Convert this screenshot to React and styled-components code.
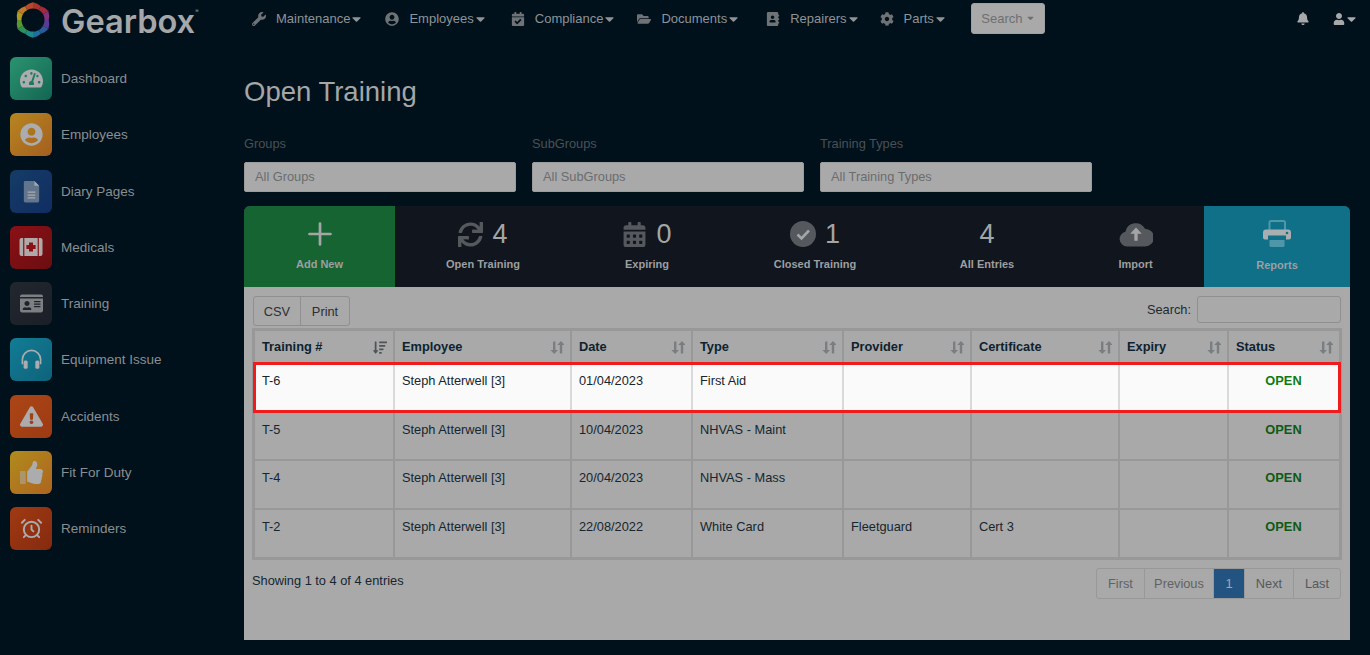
import React from 'react';
import styled, { createGlobalStyle } from 'styled-components';
import {
  FaTachometerAlt, FaUserCircle, FaExclamationTriangle, FaWrench, FaCalendarCheck,
  FaFolderOpen, FaAddressBook, FaCog, FaBell, FaUser, FaCaretDown,
  FaSync, FaCalendarAlt, FaSortAmountDown, FaIdCard,
} from 'react-icons/fa';
import { Plus, AlarmClock } from 'lucide-react';

const GlobalStyle = createGlobalStyle`
  html, body {
    margin: 0;
    padding: 0;
    background: #00111c;
    font-family: "Liberation Sans", Arial, sans-serif;
    font-size: 13px;
  }
  * { box-sizing: border-box; }
`;

const Page = styled.div`
  display: grid;
  grid-template-columns: 244px 1126px;
  grid-template-rows: 37px 1fr;
  width: 1370px;
  height: 655px;
  overflow: hidden;
  background: #00111c;
`;

const Brand = styled.div`
  display: flex;
  align-items: center;
  gap: 10px;
  padding: 3px 0 0 15px;
  height: 37px;
`;

const BrandName = styled.span`
  font-family: Inter, "Liberation Sans", sans-serif;
  font-size: 32.6px;
  font-weight: 600;
  color: #a5a7a9;
  line-height: 37px;
  margin-top: 3px;
  sup { font-size: 5px; font-weight: 400; vertical-align: 20px; line-height: 0; }
`;

const TopBar = styled.nav`
  display: flex;
  align-items: center;
  height: 37px;
  padding-left: 8px;
  color: #8b8f93;
`;

const NavItem = styled.div`
  display: flex;
  align-items: center;
  margin-right: ${(p) => p.$gap}px;
  font-size: 13px;
  color: #8f9396;
  svg.lead { width: 14px; height: 14px; margin-right: 10px; color: #6f7376; }
  svg.caret { width: 9px; height: 14px; margin-left: 2px; }
`;

const SearchButton = styled.button`
  display: flex;
  align-items: center;
  gap: 5px;
  width: 74px;
  height: 31px;
  margin: -1px 0 0 -1px;
  justify-content: center;
  background: #a9a9a9;
  border: 1px solid #a0a0a0;
  border-radius: 3px;
  color: #6d7073;
  font: 13px "Liberation Sans", sans-serif;
  svg { width: 7px; height: 10px; }
`;

const TopRight = styled.div`
  display: flex;
  align-items: center;
  gap: 24px;
  margin-left: auto;
  padding-right: 14px;
  color: #a6a8a9;
  svg.bell { width: 12px; height: 13px; }
  svg.user { width: 12px; height: 12px; }
  svg.caret { width: 9px; height: 14px; margin-left: 2px; }
`;

const UserMenu = styled.div`
  display: flex;
  align-items: center;
`;

const Sidebar = styled.aside`
  display: flex;
  flex-direction: column;
  gap: 13.25px;
  padding: 20px 0 0 10px;
`;

const SideItem = styled.div`
  display: flex;
  align-items: center;
  gap: 9px;
  font-size: 13.5px;
  color: #8a8e91;
`;

const SideIcon = styled.div`
  display: flex;
  align-items: center;
  justify-content: center;
  width: 42px;
  height: 43px;
  border-radius: 6px;
  background: linear-gradient(135deg, ${(p) => p.$from}, ${(p) => p.$to});
  color: #aaacae;
  svg { width: ${(p) => p.$size || 23}px; height: ${(p) => p.$size || 23}px; }
`;

const Main = styled.main`
  padding: 0;
`;

const Title = styled.h1`
  margin: 38px 0 0;
  font-size: 27.5px;
  line-height: 34px;
  font-weight: 400;
  color: #a4a6a8;
  font-family: "Liberation Sans", sans-serif;
`;

const Filters = styled.div`
  display: flex;
  gap: 16px;
  margin-top: 27px;
`;

const Filter = styled.div`
  width: 272px;
`;

const FilterLabel = styled.div`
  font-size: 12.8px;
  line-height: 16px;
  color: #4a5054;
  margin-bottom: 10px;
`;

const FilterBox = styled.div`
  height: 30px;
  line-height: 28px;
  padding-left: 10px;
  background: #a9a9a9;
  border: 1px solid #9c9c9c;
  border-radius: 2px;
  font-size: 12.8px;
  color: #6a6d70;
`;

const Panel = styled.section`
  margin-top: 14px;
  height: 434px;
  width: 1106px;
  background: #a9a9a9;
  border-radius: 6px 6px 0 0;
`;

const Tabs = styled.div`
  display: grid;
  grid-template-columns: 151px 176px 152px 184px 160px 137px 146px;
  height: 81px;
  background: #10151e;
  border-radius: 6px 6px 0 0;
  overflow: hidden;
`;

const Tab = styled.div`
  display: flex;
  flex-direction: column;
  align-items: center;
  padding-top: 14px;
  background: ${(p) => p.$bg || 'transparent'};
`;

const TabTop = styled.div`
  display: flex;
  align-items: center;
  gap: 9px;
  height: 28px;
  font-size: 27px;
  line-height: 28px;
  color: #a3a5a7;
  svg { width: ${(p) => p.$size || 25}px; height: ${(p) => p.$size || 25}px; color: ${(p) => p.$color || '#55585d'}; flex-shrink: 0; }
`;

const TabLabel = styled.div`
  margin-top: ${(p) => p.$mt || 9}px;
  font-size: 11px;
  line-height: 14px;
  font-weight: 700;
  color: #9d9fa1;
`;

const Body = styled.div`
  padding: 9px 9px 0;
`;

const TableTools = styled.div`
  display: flex;
  align-items: flex-start;
  justify-content: space-between;
  height: 33px;
`;

const ButtonGroup = styled.div`
  display: flex;
  height: 30px;
  border: 1px solid #8f8f8f;
  border-radius: 3px;
  color: #2c2f33;
  font-size: 12.8px;
`;

const GroupButton = styled.div`
  display: flex;
  align-items: center;
  justify-content: center;
  width: ${(p) => p.$w}px;
  & + & { border-left: 1px solid #8f8f8f; }
`;

const SearchWrap = styled.label`
  display: flex;
  align-items: center;
  gap: 6px;
  font-size: 12.8px;
  color: #1e2a33;
`;

const SearchInput = styled.div`
  width: 144px;
  height: 27px;
  border: 1px solid #8f8f8f;
  border-radius: 3px;
`;

const Table = styled.table`
  width: 1086px;
  margin: 0 0 0 -0.5px;
  border-collapse: collapse;
  table-layout: fixed;
  font-size: 12.8px;
  color: #16262f;
  outline: 2px solid #989898;
  outline-offset: -1px;
`;

const Th = styled.th`
  position: relative;
  height: 33px;
  padding: 0 7.5px;
  text-align: left;
  font-weight: 700;
  color: #0e222f;
  border: 2px solid #989898;
  svg.sort { position: absolute; right: 6px; top: 9px; width: 14px; height: 15px; color: ${(p) => (p.$active ? '#4f5356' : '#7b7e81')}; }
`;

const Row = styled.tr`
  position: relative;
  background: ${(p) => (p.$hot ? '#fafafa' : '#a9a9a9')};
  ${(p) => p.$hot && 'outline: 3px solid #ee1c1c; outline-offset: -2px;'}
`;

const Td = styled.td`
  height: 48.7px;
  padding: 9px 7.5px 0;
  vertical-align: top;
  border: 2px solid ${(p) => (p.$hot ? '#d9d9d9' : '#989898')};
  line-height: 16px;
  color: #16262f;
`;

const Status = styled.div`
  text-align: center;
  font-weight: 700;
  color: ${(p) => (p.$hot ? '#0f7a12' : '#0f5a14')};
`;

const Footer = styled.div`
  display: flex;
  justify-content: space-between;
  align-items: flex-start;
  margin-top: 9px;
`;

const Info = styled.div`
  font-size: 12.8px;
  line-height: 30px;
  margin: -2px 0 0 -1px;
  color: #16262f;
`;

const Pager = styled.div`
  display: flex;
  height: 31px;
  border: 1px solid #989898;
  border-radius: 3px;
  font-size: 12.8px;
`;

const PageLink = styled.div`
  display: flex;
  align-items: center;
  justify-content: center;
  width: ${(p) => p.$w}px;
  color: ${(p) => (p.$active ? '#a3a8ad' : p.$dim ? '#606366' : '#55585b')};
  background: ${(p) => (p.$active ? '#235380' : 'transparent')};
  & + & { border-left: 1px solid #989898; }
`;

function DiaryIcon() {
  return (
    <svg viewBox="0 0 24 24">
      <path d="M5 1h10l5 5v16a1.5 1.5 0 0 1-1.5 1.5h-13A1.5 1.5 0 0 1 4 22V2.5A1.5 1.5 0 0 1 5 1z" fill="#63758c" />
      <path d="M15 1l5 5h-5z" fill="#a2a8ad" />
      <path d="M8 12h8v1.4H8zM8 15h8v1.4H8zM8 18h8v1.4H8z" fill="#aaacae" />
    </svg>
  );
}

function MedicalIcon() {
  return (
    <svg viewBox="0 0 24 24">
      <rect x="0.5" y="3" width="23" height="18" rx="2" fill="#b0a9a9" />
      <rect x="4" y="3" width="1.4" height="18" fill="#8a2a2c" />
      <rect x="18.6" y="3" width="1.4" height="18" fill="#8a2a2c" />
      <path d="M10 7.5h4V10h2.6v4H14v2.5h-4V14H7.4v-4H10z" fill="#8a1216" />
    </svg>
  );
}

function HeadphoneIcon() {
  return (
    <svg viewBox="0 0 24 24" fill="none">
      <path d="M2.5 17v-5a9.5 9.5 0 0 1 19 0v5" stroke="currentColor" strokeWidth="1.7" />
      <rect x="3.8" y="13" width="4.2" height="8.6" rx="1.6" fill="currentColor" />
      <rect x="16" y="13" width="4.2" height="8.6" rx="1.6" fill="currentColor" />
    </svg>
  );
}

function ThumbIcon() {
  return (
    <svg viewBox="0 0 512 512">
      <rect x="0" y="224" width="128" height="288" rx="22" fill="#aaacae" opacity="0.55" />
      <path
        fill="currentColor"
        d="M384 81.452c0 42.416-25.97 66.208-33.277 94.548h101.723c33.397 0 59.397 27.746 59.553 58.098.084 17.938-7.546 37.249-19.439 49.197l-.11.11c9.836 23.337 8.237 56.037-9.308 79.469 8.681 25.895-.069 57.704-16.382 74.757 4.298 17.598 2.244 32.575-6.148 44.632C440.202 511.587 389.616 512 346.839 512l-2.845-.001c-48.287-.017-87.806-17.598-119.56-31.725-15.957-7.099-36.821-15.887-52.651-16.178-6.54-.12-11.783-5.457-11.783-11.998v-213.77c0-3.2 1.282-6.271 3.558-8.521 39.614-39.144 56.648-80.587 89.117-113.111 14.804-14.832 20.188-37.236 25.393-58.902C282.515 39.293 291.817 0 312 0c24 0 72 8 72 81.452z"
      />
    </svg>
  );
}

function TrainingIcon() {
  return <FaIdCard style={{ color: '#7d8083' }} />;
}

function CheckCircleIcon() {
  return (
    <svg viewBox="0 0 26 26">
      <circle cx="13" cy="13" r="13" fill="currentColor" />
      <path d="M7.5 13.5l4 4 7.5-8" fill="none" stroke="#a3a5a7" strokeWidth="2.6" />
    </svg>
  );
}

function CloudIcon() {
  return (
    <svg viewBox="0 0 34 26">
      <path
        d="M8 25.5a7.5 7.5 0 0 1-1.6-14.8A10.5 10.5 0 0 1 26 7.8a8.8 8.8 0 0 1 .2 17.7z"
        fill="currentColor"
      />
      <path d="M17 6.5l5.8 6.2h-4.1v7h-3.4v-7h-4.1z" fill="#a3a5a7" />
    </svg>
  );
}

function PrinterIcon() {
  return (
    <svg viewBox="0 0 28 28">
      <path d="M6.5 10V2.5A1.5 1.5 0 0 1 8 1h12.5a1.5 1.5 0 0 1 1.5 1.5V10" fill="none" stroke="#4f97a8" strokeWidth="2" />
      <path d="M3 9.5h22a3 3 0 0 1 3 3v5a2 2 0 0 1-2 2h-3v-4H5v4H2a2 2 0 0 1-2-2v-5a3 3 0 0 1 3-3z" fill="#a9aeb0" />
      <circle cx="24" cy="13" r="1.3" fill="#0f7088" />
      <path d="M6.5 20h15v5.5a1.5 1.5 0 0 1-1.5 1.5H8a1.5 1.5 0 0 1-1.5-1.5z" fill="#4f97a8" />
    </svg>
  );
}

const sideItems = [
  ['Dashboard', FaTachometerAlt, '#2a9470', '#146552'],
  ['Employees', FaUserCircle, '#b78620', '#a45e1f'],
  ['Diary Pages', DiaryIcon, '#143c66', '#112d62'],
  ['Medicals', MedicalIcon, '#8a1116', '#6b0e11'],
  ['Training', TrainingIcon, '#22262e', '#1b1f27'],
  ['Equipment Issue', HeadphoneIcon, '#127c96', '#0e637a'],
  ['Accidents', FaExclamationTriangle, '#ab4616', '#9e3a13'],
  ['Fit For Duty', ThumbIcon, '#b08c1c', '#ae6420'],
  ['Reminders', AlarmClock, '#a03a13', '#852a0f'],
];

const navItems = [
  ['Maintenance', FaWrench, 24],
  ['Employees', FaUserCircle, 26],
  ['Compliance', FaCalendarCheck, 23],
  ['Documents', FaFolderOpen, 28],
  ['Repairers', FaAddressBook, 22],
  ['Parts', FaCog, 27],
];

const columns = [
  ['Training #', 140, true],
  ['Employee', 177],
  ['Date', 121],
  ['Type', 151],
  ['Provider', 128],
  ['Certificate', 148],
  ['Expiry', 109],
  ['Status', 112],
];

const rows = [
  ['T-6', 'Steph Atterwell [3]', '01/04/2023', 'First Aid', '', ''],
  ['T-5', 'Steph Atterwell [3]', '10/04/2023', 'NHVAS - Maint', '', ''],
  ['T-4', 'Steph Atterwell [3]', '20/04/2023', 'NHVAS - Mass', '', ''],
  ['T-2', 'Steph Atterwell [3]', '22/08/2022', 'White Card', 'Fleetguard', 'Cert 3'],
];

function Logo() {
  const colors = ['#a8362a', '#a32a3e', '#84307a', '#5a3a92', '#2c5a9e', '#1f6fa0', '#1f8a8a', '#2f8f5a', '#5c962e', '#b09a24', '#c07a28', '#b84a28'];
  const n = colors.length;
  return (
    <svg width="36" height="36" viewBox="0 0 36 36">
      {colors.map((c, i) => {
        const a = ((i * 360) / n - 90) * (Math.PI / 180);
        const b = (((i + 1) * 360) / n - 90) * (Math.PI / 180);
        const pt = (r, t) => `${18 + r * Math.cos(t)},${18 + r * Math.sin(t)}`;
        const mid = (a + b) / 2;
        return (
          <polygon
            key={c}
            fill={c}
            points={`${pt(10, a)} ${pt(i % 2 ? 15.8 : 17.8, a)} ${pt(16.8, mid)} ${pt(i % 2 ? 17.8 : 15.8, b)} ${pt(10, b)}`}
          />
        );
      })}
      <circle cx="18" cy="18" r="11.5" fill="#00111c" />
    </svg>
  );
}

function SortIcon({ active }) {
  if (active) return <FaSortAmountDown className="sort" />;
  return (
    <svg className="sort" viewBox="0 0 14 14" fill="currentColor">
      <path d="M3 1h2.4v8.4H8L4.2 13.5.4 9.4H3zM9.8 13V4.6H7.2L11 .5l3.8 4.1h-2.6V13z" />
    </svg>
  );
}

export default function App() {
  return (
    <Page>
      <GlobalStyle />
      <Brand>
        <Logo />
        <BrandName>Gearbox<sup>®</sup></BrandName>
      </Brand>
      <TopBar>
        {navItems.map(([label, Icon, gap]) => (
          <NavItem key={label} $gap={gap}>
            <Icon className="lead" />
            {label}
            <FaCaretDown className="caret" />
          </NavItem>
        ))}
        <SearchButton>
          Search <FaCaretDown />
        </SearchButton>
        <TopRight>
          <FaBell className="bell" />
          <UserMenu>
            <FaUser className="user" />
            <FaCaretDown className="caret" />
          </UserMenu>
        </TopRight>
      </TopBar>

      <Sidebar>
        {sideItems.map(([label, Icon, from, to]) => (
          <SideItem key={label}>
            <SideIcon $from={from} $to={to} $size={label === 'Medicals' ? 24 : 23}>
              <Icon />
            </SideIcon>
            {label}
          </SideItem>
        ))}
      </Sidebar>

      <Main>
        <Title>Open Training</Title>
        <Filters>
          <Filter>
            <FilterLabel>Groups</FilterLabel>
            <FilterBox>All Groups</FilterBox>
          </Filter>
          <Filter>
            <FilterLabel>SubGroups</FilterLabel>
            <FilterBox>All SubGroups</FilterBox>
          </Filter>
          <Filter>
            <FilterLabel>Training Types</FilterLabel>
            <FilterBox>All Training Types</FilterBox>
          </Filter>
        </Filters>

        <Panel>
          <Tabs>
            <Tab $bg="#166432">
              <TabTop $size={36} $color="#a3a5a7"><Plus strokeWidth={1.8} /></TabTop>
              <TabLabel>Add New</TabLabel>
            </Tab>
            <Tab>
              <TabTop><FaSync />4</TabTop>
              <TabLabel>Open Training</TabLabel>
            </Tab>
            <Tab>
              <TabTop><FaCalendarAlt />0</TabTop>
              <TabLabel>Expiring</TabLabel>
            </Tab>
            <Tab>
              <TabTop $size={26}><CheckCircleIcon />1</TabTop>
              <TabLabel>Closed Training</TabLabel>
            </Tab>
            <Tab>
              <TabTop>4</TabTop>
              <TabLabel>All Entries</TabLabel>
            </Tab>
            <Tab>
              <TabTop $size={34}><CloudIcon /></TabTop>
              <TabLabel>Import</TabLabel>
            </Tab>
            <Tab $bg="#0f7088">
              <TabTop $size={28}><PrinterIcon /></TabTop>
              <TabLabel $mt={10}>Reports</TabLabel>
            </Tab>
          </Tabs>

          <Body>
            <TableTools>
              <ButtonGroup>
                <GroupButton $w={46}>CSV</GroupButton>
                <GroupButton $w={49}>Print</GroupButton>
              </ButtonGroup>
              <SearchWrap>
                Search:
                <SearchInput />
              </SearchWrap>
            </TableTools>

            <Table>
              <colgroup>
                {columns.map(([label, w]) => <col key={label} style={{ width: w }} />)}
              </colgroup>
              <thead>
                <tr>
                  {columns.map(([label, , active]) => (
                    <Th key={label} $active={active}>
                      {label}
                      <SortIcon active={active} />
                    </Th>
                  ))}
                </tr>
              </thead>
              <tbody>
                {rows.map((row, i) => (
                  <Row key={row[0]} $hot={i === 0}>
                    {row.map((v, j) => <Td key={j} $hot={i === 0}>{v}</Td>)}
                    <Td $hot={i === 0} />
                    <Td $hot={i === 0}><Status $hot={i === 0}>OPEN</Status></Td>
                  </Row>
                ))}
              </tbody>
            </Table>

            <Footer>
              <Info>Showing 1 to 4 of 4 entries</Info>
              <Pager>
                <PageLink $w={47} $dim>First</PageLink>
                <PageLink $w={69} $dim>Previous</PageLink>
                <PageLink $w={31} $active>1</PageLink>
                <PageLink $w={49}>Next</PageLink>
                <PageLink $w={47}>Last</PageLink>
              </Pager>
            </Footer>
          </Body>
        </Panel>
      </Main>
    </Page>
  );
}
